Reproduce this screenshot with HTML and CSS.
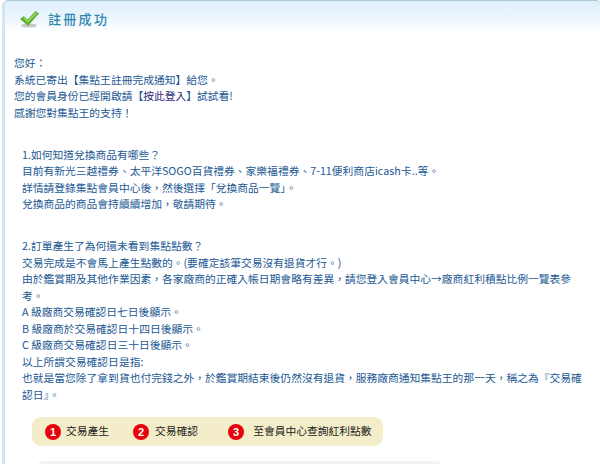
FILE: index.html
```html
<!DOCTYPE html>
<html lang="zh-Hant">
<head>
<meta charset="utf-8">
<title>註冊成功</title>
<link rel="stylesheet" href="styles.css">
</head>
<body>
<main class="panel">
  <header class="head">
    <svg class="check" width="19" height="17" viewBox="0 0 19 17"><ellipse cx="9" cy="14.500" rx="8" ry="2" fill="#c9c9c9"/><path d="M0.500 8 L4 5.500 L7.500 9 L15.500 0.500 L18.500 2.500 L8 14.500 Z" fill="#5db52f" stroke="#4c9a24" stroke-width=".6"/><path d="M4 6.500 L7.500 10 L15.500 1.500 L16.500 2.500 L7.800 11.500 L3.500 7.500 Z" fill="#a4de62"/></svg>
    <h1 class="title">註冊成功</h1>
  </header>
  <section class="intro">
    <p>您好：</p>
    <p>系統已寄出【集點王註冊完成通知】給您。</p>
    <p>您的會員身份已經開啟請【<a class="link" href="#">按此登入</a>】試試看!</p>
    <p>感謝您對集點王的支持！</p>
  </section>
  <section class="faq first">
    <p>1.如何知道兌換商品有哪些？</p>
    <p>目前有新光三越禮券、太平洋SOGO百貨禮券、家樂福禮券、7-11便利商店icash卡..等。</p>
    <p>詳情請登錄集點會員中心後，然後選擇「兌換商品一覽」。</p>
    <p>兌換商品的商品會持續續增加，敬請期待。</p>
  </section>
  <section class="faq second">
    <p>2.訂單產生了為何還未看到集點點數？</p>
    <p>交易完成是不會馬上產生點數的。(要確定該筆交易沒有退貨才行。)</p>
    <p>由於鑑賞期及其他作業因素，各家廠商的正確入帳日期會略有差異，請您登入會員中心→廠商紅利積點比例一覽表參考。</p>
    <p>A 級廠商交易確認日七日後顯示。</p>
    <p>B 級廠商於交易確認日十四日後顯示。</p>
    <p>C 級廠商交易確認日三十日後顯示。</p>
    <p>以上所謂交易確認日是指:</p>
    <p>也就是當您除了拿到貨也付完錢之外，於鑑賞期結束後仍然沒有退貨，服務廠商通知集點王的那一天，稱之為『交易確認日』。</p>
  </section>
  <ol class="steps">
    <li class="step s1"><span class="num">1</span>交易產生</li>
    <li class="step s2"><span class="num">2</span>交易確認</li>
    <li class="step s3"><span class="num">3</span>至會員中心查詢紅利點數</li>
  </ol>
  <div class="detail"></div>
</main>
</body>
</html>
```
FILE: styles.css
```css
* { box-sizing: border-box; }
html, body { margin: 0; padding: 0; height: 464px; overflow: hidden; background: #fff; }
body { font-family: "Noto Sans CJK TC", "Liberation Sans", sans-serif; font-size: 10.77px; line-height: 16.5px; color: #225893; }
p { margin: 0; }
.panel { margin-left: 2px; height: 464px; overflow: hidden; border-left: 3px solid #d3e4f3; border-top: 1px solid #a9c8da; border-radius: 6px 4px 0 0; background: linear-gradient(#dff0fb 0, #e8f4fc 14px, #fff 31px); }
.head { display: flex; align-items: center; height: 36px; padding-left: 15px; }
.check { display: block; }
.title { margin: 0 0 0 9px; font-size: 13px; font-weight: 500; letter-spacing: 2.300px; color: #2f88ae; line-height: 16px; }
.intro { margin-top: 18px; padding-left: 9px; padding-right: 8px; }
.faq { padding-left: 17px; padding-right: 13px; }
.first { margin-top: 25.500px; }
.second { margin-top: 25.500px; }
.link { color: #2c2a78; text-decoration: none; }
.steps { list-style: none; display: flex; align-items: center; width: 351px; height: 29px; margin: 14px 0 0 27px; padding: 0; background: #f3eec9; border-radius: 9px; color: #222; white-space: nowrap; }
.step { display: flex; align-items: center; }
.num { width: 16px; height: 16px; margin-right: 5px; border-radius: 50%; background: #e8000c; color: #fff; font-family: "Liberation Sans", sans-serif; font-weight: 700; font-size: 11px; line-height: 16px; text-align: center; }
.s1 { margin-left: 13px; }
.s2 { margin-left: 24px; }
.s2 .num { margin-right: 6px; }
.s3 { margin-left: 30px; }
.s3 .num { margin-right: 9px; }
.detail { width: 407px; height: 20px; margin: 15px 0 0 31px; background: #f2f2f2; border-radius: 8px 8px 0 0; }
```
